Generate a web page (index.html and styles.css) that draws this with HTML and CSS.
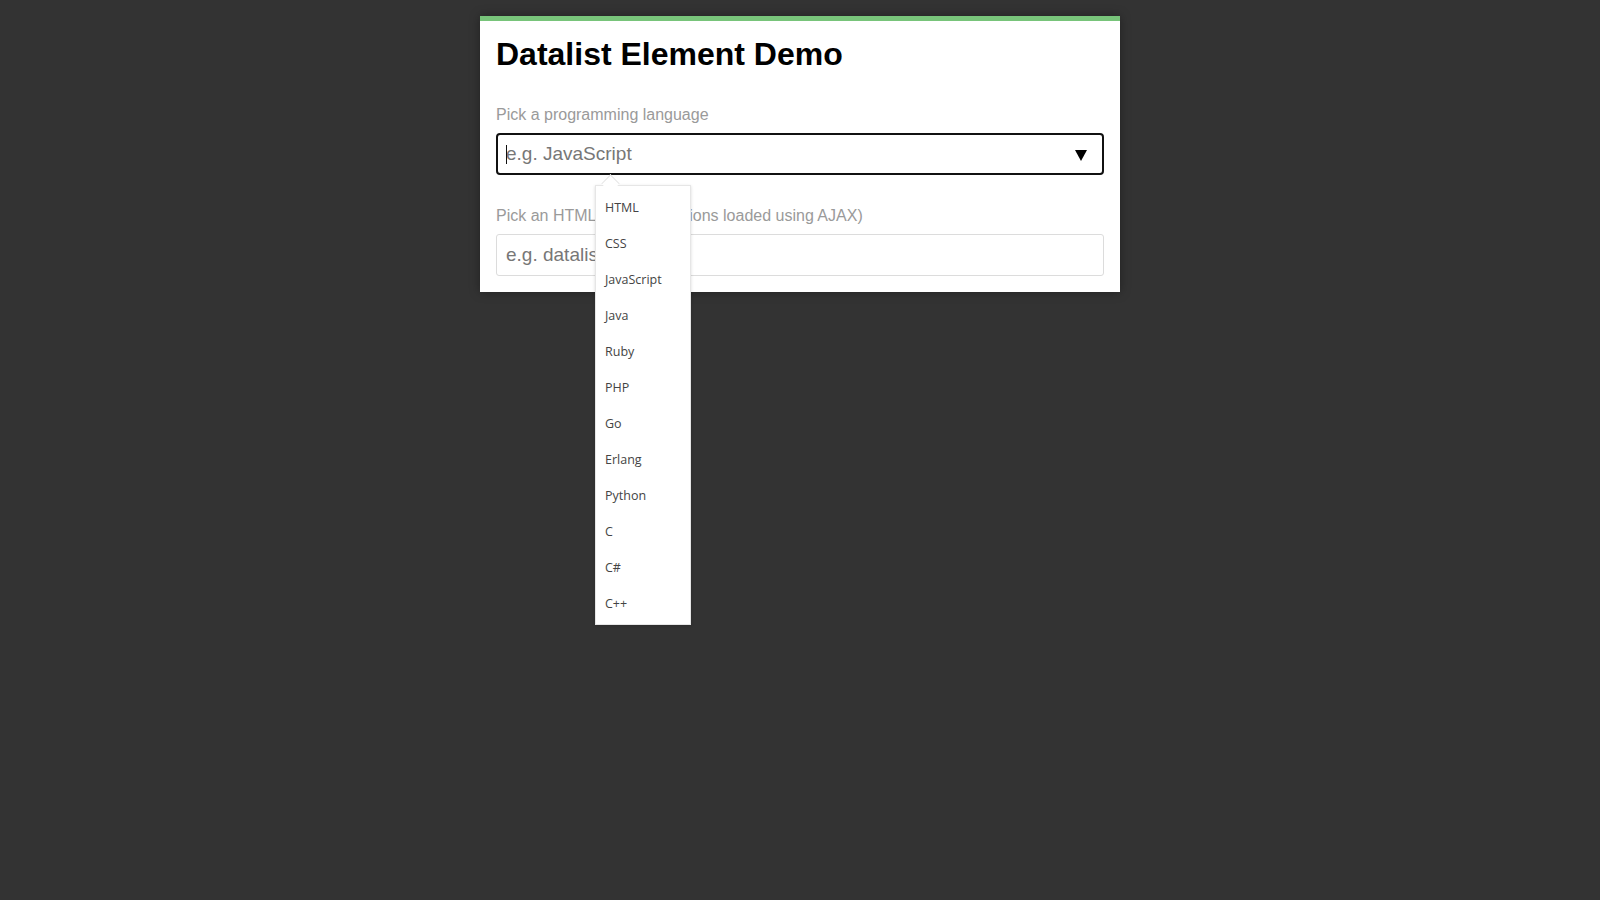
FILE: index.html
```html
<!DOCTYPE html>
<html lang="en">
<head>
<meta charset="utf-8">
<title>Datalist Element Demo</title>
<link rel="stylesheet" href="styles.css">
</head>
<body>
  <main class="card">
    <h1 class="title">Datalist Element Demo</h1>
    <div class="field">
      <label class="label" for="lang">Pick a programming language</label>
      <div class="input-wrap">
        <input id="lang" class="input input-focus" type="text" placeholder="e.g. JavaScript">
        <span class="caret-line"></span>
        <span class="arrow"></span>
        <ul class="popup">
          <li>HTML</li>
          <li>CSS</li>
          <li>JavaScript</li>
          <li>Java</li>
          <li>Ruby</li>
          <li>PHP</li>
          <li>Go</li>
          <li>Erlang</li>
          <li>Python</li>
          <li>C</li>
          <li>C#</li>
          <li>C++</li>
        </ul>
      </div>
    </div>
    <div class="field">
      <label class="label" for="el">Pick an HTML element (options loaded using AJAX)</label>
      <div class="input-wrap">
        <input id="el" class="input" type="text" placeholder="e.g. datalist">
      </div>
    </div>
  </main>
</body>
</html>
```
FILE: styles.css
```css
html, body {
  margin: 0;
  padding: 0;
}
body {
  background: #333333;
  font-family: "Liberation Sans", Arial, sans-serif;
  min-height: 900px;
}
.card {
  width: 640px;
  box-sizing: border-box;
  margin: 16px auto 0;
  background: #ffffff;
  border-top: 5px solid #78c47a;
  padding: 15px 16px 16px;
  box-shadow: 0 0 10px rgba(0, 0, 0, 0.35);
}
.title {
  margin: 0;
  font-size: 32px;
  line-height: 37px;
  font-weight: bold;
  color: #000;
}
.field {
  margin-top: 33px;
}
.field + .field {
  margin-top: 32px;
}
.label {
  display: block;
  font-size: 16px;
  line-height: 18px;
  color: #9a9a9a;
  margin-bottom: 9px;
}
.input-wrap {
  position: relative;
}
.input {
  display: block;
  width: 100%;
  height: 42px;
  box-sizing: border-box;
  border: 1px solid #dcdcdc;
  border-radius: 3px;
  padding: 0 9px;
  font-family: "Liberation Sans", Arial, sans-serif;
  font-size: 19px;
  color: #333;
  background: #fff;
  outline: none;
}
.input::placeholder {
  color: #777777;
}
.input-focus {
  border: 2px solid #111;
  border-radius: 4px;
  padding: 0 8px;
}
.caret-line {
  position: absolute;
  left: 10px;
  top: 12px;
  width: 1px;
  height: 19px;
  background: #111;
}
.arrow {
  position: absolute;
  right: 17px;
  top: 17px;
  width: 0;
  height: 0;
  border-left: 6px solid transparent;
  border-right: 6px solid transparent;
  border-top: 11px solid #000;
}
.popup {
  position: absolute;
  left: 99px;
  top: 52px;
  width: 96px;
  box-sizing: border-box;
  margin: 0;
  padding: 4px 0 2px;
  list-style: none;
  background: #fff;
  border: 1px solid #e6e6e6;
  box-shadow: 0 1px 3px rgba(0, 0, 0, 0.15);
  z-index: 5;
}
.popup::before {
  content: "";
  position: absolute;
  left: 8px;
  top: -9px;
  width: 12px;
  height: 12px;
  background: #fff;
  border-left: 1px solid #e6e6e6;
  border-top: 1px solid #e6e6e6;
  transform: rotate(45deg);
}
.popup li {
  position: relative;
  height: 36px;
  line-height: 36px;
  padding-left: 9px;
  font-family: "Open Sans", "Noto Sans", sans-serif;
  font-size: 12.5px;
  color: #444;
}
```
